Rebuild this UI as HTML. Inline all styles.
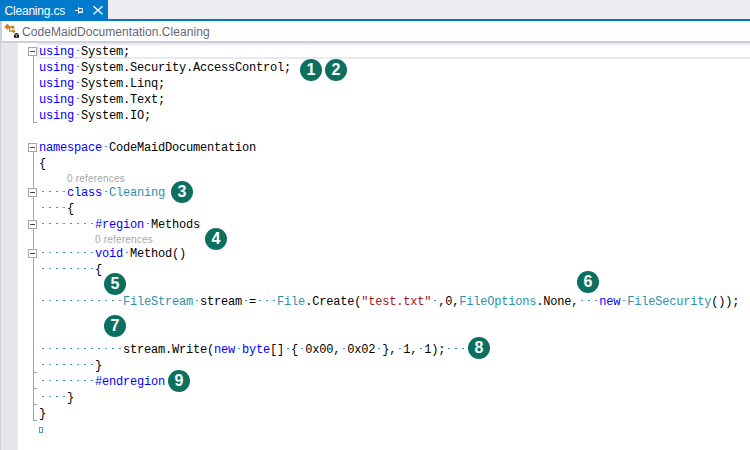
<!DOCTYPE html>
<html><head><meta charset="utf-8">
<style>
html,body{margin:0;padding:0;}
body{width:750px;height:450px;overflow:hidden;position:relative;background:#fff;font-family:"Liberation Sans",sans-serif;}
.abs{position:absolute;}
#tabbar{left:0;top:0;width:750px;height:19px;background:#EEEEF2;}
#tab{left:0;top:0;width:108px;height:19px;background:#007ACC;}
#tabtxt{left:4.5px;top:3px;letter-spacing:-0.2px;color:#fff;font-size:12px;line-height:16px;white-space:nowrap;}
#blueline{left:0;top:19px;width:750px;height:2px;background:#007ACC;}
#crumb{left:0;top:21px;width:750px;height:20px;background:#fff;}
#crumbL{left:0;top:21px;width:2px;height:20px;background:#CCCEDB;}
#crumbB{left:0;top:41px;width:750px;height:2px;background:#CCCEDB;}
#crumbtxt{left:22px;top:24px;letter-spacing:0.05px;color:#666677;font-size:12px;line-height:16px;white-space:nowrap;}
#marginL{left:0;top:43px;width:1px;height:407px;background:#CCCEDB;}
#glyph{left:1px;top:43px;width:17px;height:407px;background:#E6E7E8;}
#hl{left:37px;top:43px;width:720px;height:12px;border:2px solid #EAEAF2;}
.ln{position:absolute;left:39px;height:16px;line-height:16px;padding-top:1px;font-family:"Liberation Mono",monospace;font-size:12px;letter-spacing:-0.2px;white-space:pre;color:#000;}
.k{color:#0000FF}.t{color:#2B91AF}.s{color:#A31515}.w{display:inline-block;height:16px;background-image:linear-gradient(to right,transparent 3px,#3A98C4 3px,#3A98C4 5px,transparent 5px);background-size:7px 1px;background-repeat:repeat-x;background-position:0 6px;}
.lens{position:absolute;font-family:"Liberation Sans",sans-serif;font-size:10px;letter-spacing:0.2px;color:#A6A6A6;line-height:13px;padding-top:1px;white-space:nowrap;}
.box{position:absolute;left:28px;width:7px;height:7px;border:1px solid #A5A5A5;background:#fff;}
.box::after{content:"";position:absolute;left:1px;top:3px;width:5px;height:1px;background:#424242;}
.vl{position:absolute;left:33px;width:1px;background:#A5A5A5;}
.tk{position:absolute;left:33px;width:4px;height:1px;background:#A5A5A5;}
.c{position:absolute;width:22px;height:22px;border-radius:50%;background:#0D705E;color:#fff;font-family:"Liberation Sans",sans-serif;font-weight:bold;font-size:16px;line-height:22px;text-align:center;}
</style></head><body>
<div id="tabbar" class="abs"></div>
<div id="tab" class="abs"></div>
<div id="tabtxt" class="abs">Cleaning.cs</div>
<svg class="abs" style="left:0;top:0" width="108" height="19">
  <g stroke="#fff" fill="none" stroke-width="1">
    <line x1="75" y1="10.5" x2="78" y2="10.5"/>
    <line x1="78.5" y1="7" x2="78.5" y2="14"/>
    <path d="M78.5 8.5 H82.5 V12.5 H78.5"/><line x1="78.5" y1="12" x2="82.5" y2="12"/>
    <line x1="93.5" y1="6.2" x2="102.5" y2="14.2" stroke-width="1.4"/>
    <line x1="102.5" y1="6.2" x2="93.5" y2="14.2" stroke-width="1.4"/>
  </g>
</svg>
<div id="blueline" class="abs"></div>
<div id="crumb" class="abs"></div>
<div id="crumbL" class="abs"></div>
<div id="crumbB" class="abs"></div>
<svg class="abs" style="left:0;top:21px" width="22" height="20">
  <g fill="#C8821A">
    <path d="M7.3 2.8 L10.3 5.8 L7.3 8.8 L4.3 5.8Z"/>
    <path d="M12.8 4.2 L14.8 6.2 L12.8 8.2 L10.8 6.2Z"/>
    <path d="M13.6 8.2 L15.6 10.2 L13.6 12.2 L11.6 10.2Z"/>
  </g>
  <path d="M7 6 H12 M9.6 6 V10.2 H13" stroke="#C8821A" stroke-width="1.3" fill="none"/>
  <rect x="14" y="13.5" width="5" height="3.3" fill="#222"/>
  <path d="M15.5 13.5 V12.5 H17.5 V13.5" stroke="#222" fill="none" stroke-width="1"/>
  <rect x="16" y="14.5" width="1" height="1" fill="#fff"/>
</svg>
<div id="crumbtxt" class="abs">CodeMaidDocumentation.Cleaning</div>
<div id="marginL" class="abs"></div>
<div id="glyph" class="abs"></div>
<div id="hl" class="abs"></div>

<!-- outlining -->
<div class="box" style="top:47px"></div>
<div class="vl" style="top:56px;height:66px"></div>
<div class="tk" style="top:122px"></div>
<div class="box" style="top:143px"></div>
<div class="vl" style="top:152px;height:36px"></div>
<div class="box" style="top:188px"></div>
<div class="vl" style="top:197px;height:23px"></div>
<div class="box" style="top:220px"></div>
<div class="vl" style="top:229px;height:20px"></div>
<div class="box" style="top:249px"></div>
<div class="vl" style="top:258px;height:163px"></div>
<div class="tk" style="top:372px"></div>
<div class="tk" style="top:388px"></div>
<div class="tk" style="top:404px"></div>
<div class="tk" style="top:420px"></div>

<div class="ln" style="top:43px"><span class="k">using</span><span class="w"> </span>System;</div>
<div class="ln" style="top:59px"><span class="k">using</span><span class="w"> </span>System.Security.AccessControl;</div>
<div class="ln" style="top:75px"><span class="k">using</span><span class="w"> </span>System.Linq;</div>
<div class="ln" style="top:91px"><span class="k">using</span><span class="w"> </span>System.Text;</div>
<div class="ln" style="top:107px"><span class="k">using</span><span class="w"> </span>System.IO;</div>
<div class="ln" style="top:139px"><span class="k">namespace</span><span class="w"> </span>CodeMaidDocumentation</div>
<div class="ln" style="top:155px">{</div>
<div class="lens" style="left:67px;top:171px">0 references</div>
<div class="ln" style="top:184px"><span class="w">    </span><span class="k">class</span><span class="w"> </span><span class="t">Cleaning</span></div>
<div class="ln" style="top:200px"><span class="w">    </span>{</div>
<div class="ln" style="top:216px"><span class="w">        </span><span class="k">#region</span><span class="w"> </span>Methods</div>
<div class="lens" style="left:95px;top:232px">0 references</div>
<div class="ln" style="top:245px"><span class="w">        </span><span class="k">void</span><span class="w"> </span>Method()</div>
<div class="ln" style="top:261px"><span class="w">        </span>{</div>
<div class="ln" style="top:293px"><span class="w">            </span><span class="t">FileStream</span><span class="w"> </span>stream<span class="w"> </span>=<span class="w">   </span><span class="t">File</span>.Create(<span class="s">"test.txt"</span><span class="w"> </span>,0,<span class="t">FileOptions</span>.None,<span class="w">   </span><span class="k">new</span><span class="w"> </span><span class="t">FileSecurity</span>());</div>
<div class="ln" style="top:341px"><span class="w">            </span>stream.Write(<span class="k">new</span><span class="w"> </span><span class="k">byte</span>[]<span class="w"> </span>{<span class="w"> </span>0x00,<span class="w"> </span>0x02<span class="w"> </span>},<span class="w"> </span>1,<span class="w"> </span>1);<span class="w">    </span></div>
<div class="ln" style="top:357px"><span class="w">        </span>}</div>
<div class="ln" style="top:373px"><span class="w">        </span><span class="k">#endregion</span></div>
<div class="ln" style="top:389px"><span class="w">    </span>}</div>
<div class="ln" style="top:405px">}</div>
<div class="abs" style="left:39px;top:427px;width:2px;height:4px;border:1px solid #4A9CBE"></div>

<!-- callouts -->
<div class="c" style="left:300px;top:59px">1</div>
<div class="c" style="left:325px;top:59px">2</div>
<div class="c" style="left:171px;top:181px">3</div>
<div class="c" style="left:205px;top:228px">4</div>
<div class="c" style="left:104px;top:273px">5</div>
<div class="c" style="left:577px;top:271px">6</div>
<div class="c" style="left:104px;top:315px">7</div>
<div class="c" style="left:468px;top:337px">8</div>
<div class="c" style="left:168px;top:370px">9</div>
</body></html>
